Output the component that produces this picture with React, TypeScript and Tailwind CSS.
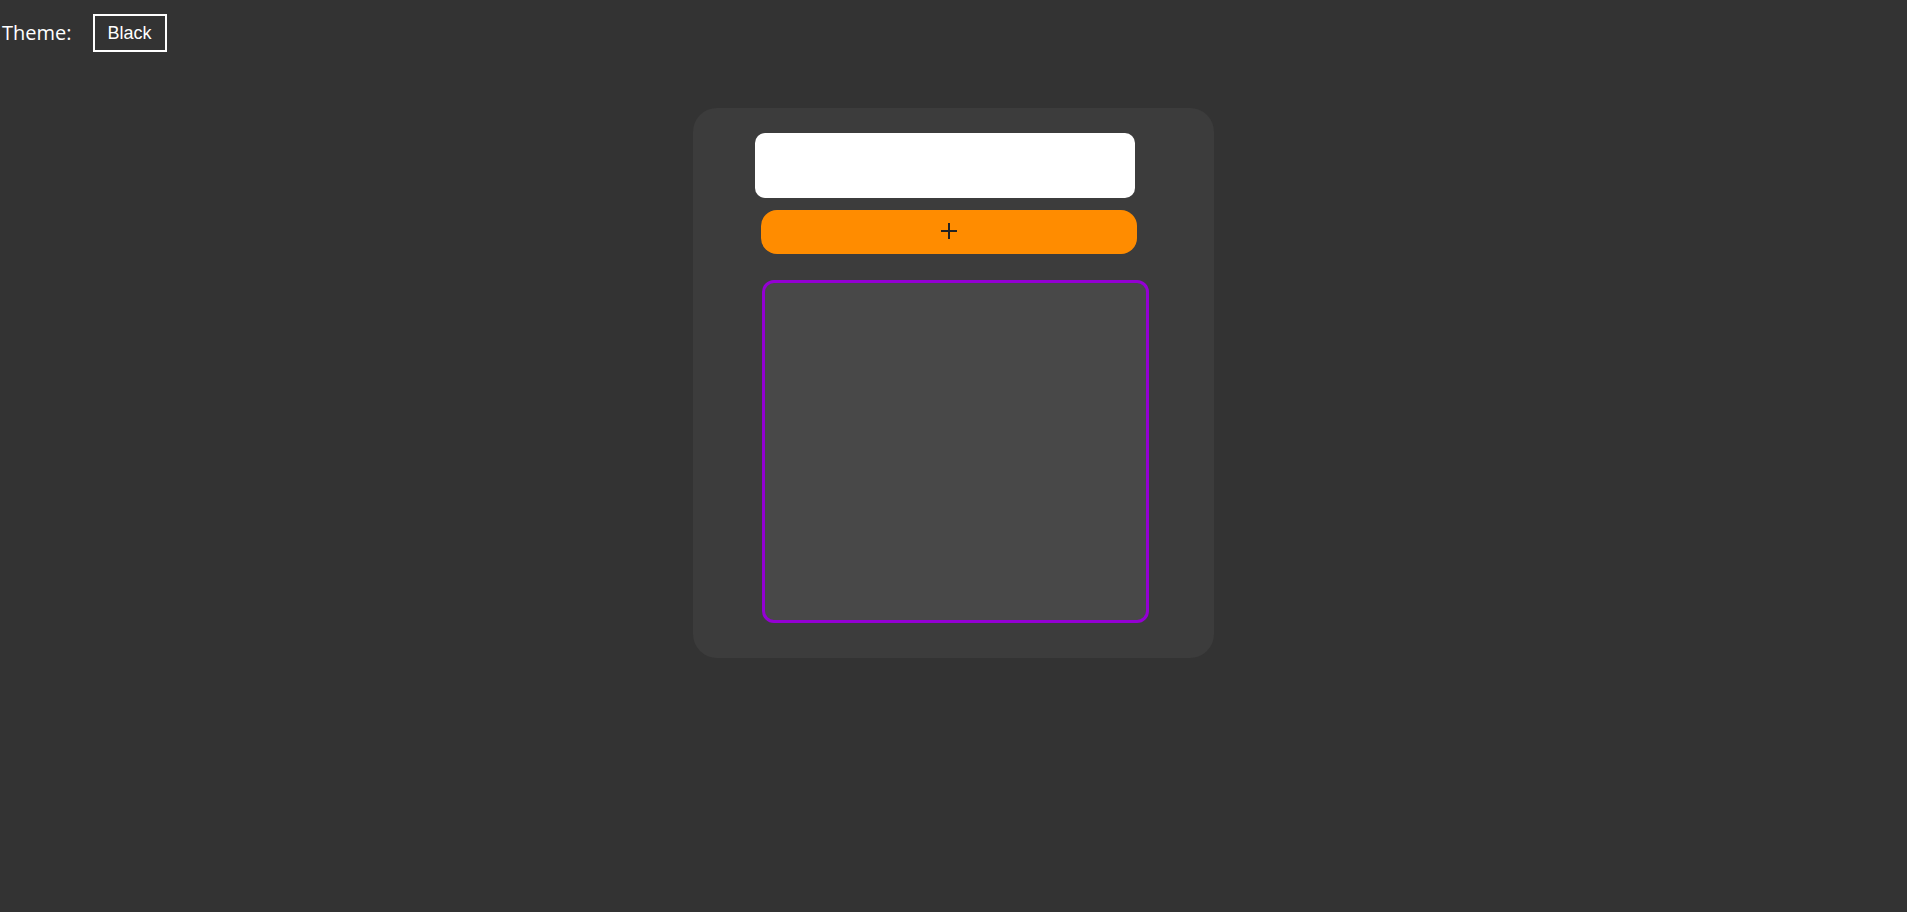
function Header() {
    return (
        <div className="flex items-center pt-[14px] pl-[2px]">
            <span className="text-[20px] text-white font-['Open_Sans',sans-serif]">Theme:</span>
            <button className="ml-[21px] w-[74px] h-[38px] border-2 border-white text-white text-[18px] font-['Liberation_Sans',Arial,sans-serif]">
                Black
            </button>
        </div>
    )
}

function PlusIcon() {
    return (
        <svg width="16" height="16" viewBox="0 0 16 16" fill="none">
            <path d="M8 0v16M0 8h16" stroke="#222222" strokeWidth="2" />
        </svg>
    )
}

function TodoCard() {
    return (
        <div className="mx-auto mt-[56px] w-[521px] rounded-3xl bg-[#3c3c3c] pt-[25px] pb-[35px] flex flex-col">
            <input
                type="text"
                className="ml-[62px] w-[380px] h-[65px] rounded-[10px] bg-white outline-none px-3"
            />
            <button className="ml-[68px] mt-[12px] w-[376px] h-[44px] pb-[2px] rounded-2xl bg-[#ff8c00] flex items-center justify-center">
                <PlusIcon />
            </button>
            <div className="ml-[69px] mt-[26px] w-[387px] h-[343px] rounded-xl border-[3px] border-[#9400d3] bg-[#484848]"></div>
        </div>
    )
}

export default function App() {
    return (
        <div className="min-h-screen bg-[#333333]">
            <Header />
            <TodoCard />
        </div>
    )
}
